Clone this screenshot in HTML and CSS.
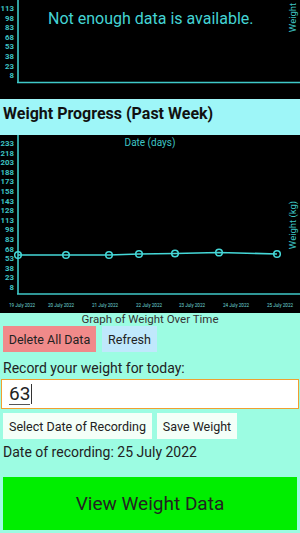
FILE: index.html
```html
<!DOCTYPE html>
<html>
<head>
<meta charset="utf-8">
<link rel="stylesheet" href="styles.css">
</head>
<body>
<div class="app">
  <div class="chart chart-top">
    <svg width="300" height="99" viewBox="0 0 300 99">
      <g class="ylab">
        <text x="14" y="11">113</text>
        <text x="14" y="20.6">98</text>
        <text x="14" y="30.2">83</text>
        <text x="14" y="39.8">68</text>
        <text x="14" y="49.4">53</text>
        <text x="14" y="59">38</text>
        <text x="14" y="68.6">23</text>
        <text x="14" y="78.2">8</text>
      </g>
      <line class="axis" x1="18" y1="0" x2="18" y2="82.5"/>
      <line class="axis" x1="17" y1="82.5" x2="300" y2="82.5"/>
      <text class="nodata" x="48" y="24">Not enough data is available.</text>
      <text class="wlabel" transform="translate(296 8) rotate(-90)">Weight (kg)</text>
    </svg>
  </div>
  <h2 class="band">Weight Progress (Past Week)</h2>
  <div class="chart chart-bottom">
    <svg width="300" height="178" viewBox="0 0 300 178">
      <g class="ylab">
        <text x="14" y="11">233</text>
        <text x="14" y="20.6">218</text>
        <text x="14" y="30.2">203</text>
        <text x="14" y="39.8">188</text>
        <text x="14" y="49.4">173</text>
        <text x="14" y="59">158</text>
        <text x="14" y="68.6">143</text>
        <text x="14" y="78.2">128</text>
        <text x="14" y="87.8">113</text>
        <text x="14" y="97.4">98</text>
        <text x="14" y="107">83</text>
        <text x="14" y="116.6">68</text>
        <text x="14" y="126.2">53</text>
        <text x="14" y="135.8">38</text>
        <text x="14" y="145.4">23</text>
        <text x="14" y="155">8</text>
      </g>
      <line class="axis" x1="18" y1="0" x2="18" y2="159"/>
      <line class="axis" x1="17" y1="159" x2="300" y2="159"/>
      <text class="title" x="150" y="11">Date (days)</text>
      <text class="wlabel" transform="translate(296 90) rotate(-90)">Weight (kg)</text>
      <polyline class="dline" points="18,120 66,120 109,120 139,119 175,118.5 219,117.5 277,119"/>
      <g class="pts">
        <circle cx="18" cy="120" r="3.3"/>
        <circle cx="66" cy="120" r="3.3"/>
        <circle cx="109" cy="120" r="3.3"/>
        <circle cx="139" cy="119" r="3.3"/>
        <circle cx="175" cy="118.5" r="3.3"/>
        <circle cx="219" cy="117.5" r="3.3"/>
        <circle cx="277" cy="119" r="3.3"/>
      </g>
      <g class="xlab">
        <text x="22" y="171.5">19 July 2022</text>
        <text x="61" y="171.5">20 July 2022</text>
        <text x="105" y="171.5">21 July 2022</text>
        <text x="149" y="171.5">22 July 2022</text>
        <text x="192" y="171.5">23 July 2022</text>
        <text x="236" y="171.5">24 July 2022</text>
        <text x="280" y="171.5">25 July 2022</text>
      </g>
    </svg>
  </div>
  <div class="caption">Graph of Weight Over Time</div>
  <div class="btn-row top-btns">
    <button class="btn btn-delete">Delete All Data</button>
    <button class="btn btn-refresh">Refresh</button>
  </div>
  <div class="label record">Record your weight for today:</div>
  <div class="input"><span class="val">63</span><span class="caret"></span></div>
  <div class="btn-row small-btns">
    <button class="btn btn-light">Select Date of Recording</button>
    <button class="btn btn-light">Save Weight</button>
  </div>
  <div class="label date">Date of recording: 25 July 2022</div>
  <button class="btn-view">View Weight Data</button>
</div>
</body>
</html>
```
FILE: styles.css
```css
* { box-sizing: border-box; }
html, body { margin: 0; padding: 0; }
body {
  width: 300px;
  height: 533px;
  overflow: hidden;
  background: #9cfce2;
  font-family: Roboto, "Noto Sans", sans-serif;
  color: #222;
}
.app { display: flex; flex-direction: column; }
.chart { background: #000; }
.chart svg { display: block; }
.chart-top { height: 99px; }
.chart-bottom { height: 178px; }
.axis { stroke: #3fc9c9; stroke-width: 1.6; }
.ylab text {
  fill: #3ec4c4;
  font-family: Roboto, sans-serif;
  font-size: 7.8px;
  font-weight: bold;
  text-anchor: end;
}
.nodata {
  fill: #44d4d4;
  font-size: 16px;
  font-family: Roboto, sans-serif;
}
.wlabel {
  fill: #3ec4c4;
  font-size: 9.5px;
  text-anchor: middle;
  font-family: Roboto, sans-serif;
}
.title {
  fill: #3ec4c4;
  font-size: 10px;
  text-anchor: middle;
  font-family: Roboto, sans-serif;
}
.dline { fill: none; stroke: #45d8d8; stroke-width: 1.6; }
.pts circle { fill: none; stroke: #45d8d8; stroke-width: 1.5; }
.xlab text {
  fill: #6fd8d8;
  font-size: 4.6px;
  text-anchor: middle;
  font-family: Roboto, sans-serif;
}
.band {
  margin: 0;
  height: 36px;
  background: #9ef6f8;
  font-size: 16px;
  font-weight: bold;
  color: #111;
  padding: 5px 0 0 3px;
  line-height: 19px;
}
.caption {
  text-align: center;
  font-size: 11.5px;
  height: 14px;
  line-height: 14px;
  margin-top: -1px;
  color: #333;
}
.btn-row { display: flex; padding-left: 3px; }
.btn {
  border: none;
  margin: 0;
  font-family: Roboto, sans-serif;
  color: #222;
  padding: 0;
}
.top-btns { gap: 6px; margin-top: 0; height: 26px; }
.btn-delete {
  background: #f08a8a;
  width: 93px;
  font-size: 12.5px;
}
.btn-refresh {
  background: #c0e8fc;
  width: 55px;
  font-size: 12.5px;
}
.label {
  font-size: 14px;
  padding-left: 3px;
  color: #222;
}
.record { margin-top: 8px; line-height: 16px; }
.input {
  margin: 3px 1px 0;
  height: 30px;
  background: #fff;
  border: 1.5px solid #f0a030;
  display: flex;
  align-items: center;
  padding-left: 7px;
  gap: 1px;
}
.val {
  font-size: 19px;
  color: #222;
  border-bottom: 1px solid #555;
  line-height: 21px;
}
.caret { width: 1px; height: 20px; background: #333; }
.small-btns { gap: 5px; margin-top: 4px; height: 26px; }
.btn-light {
  background: #f4fff8;
  font-size: 12.5px;
  padding: 0 4px;
}
.small-btns .btn-light:first-child { width: 149px; }
.small-btns .btn-light:last-child { width: 80px; }
.date { margin-top: 5px; line-height: 16px; }
.btn-view {
  margin: 17px 3px 0;
  height: 53px;
  background: #00ee00;
  border: none;
  font-family: Roboto, sans-serif;
  font-size: 19px;
  color: #222;
}
```
